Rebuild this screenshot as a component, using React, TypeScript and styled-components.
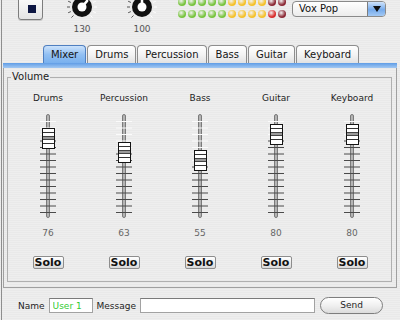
import React from "react";
import styled, { createGlobalStyle } from "styled-components";

const GlobalStyle = createGlobalStyle`
  html, body { margin: 0; padding: 0; }
  body {
    width: 400px;
    height: 320px;
    overflow: hidden;
    background-color: #ececec;
    background-image: repeating-linear-gradient(0deg, #eeeeee 0px, #eeeeee 1px, #e9e9e9 1px, #e9e9e9 2px);
    font-family: "DejaVu Sans", "Liberation Sans", sans-serif;
    color: #1e1e1e;
  }
`;

const Window = styled.div`
  width: 398px;
  height: 320px;
  margin-left: 1px;
  border-left: 1px solid #8e8e8e;
  overflow: hidden;
  display: flex;
  flex-direction: column;
`;

/* ---------- toolbar ---------- */
const Toolbar = styled.div`
  display: flex;
  align-items: flex-start;
  height: 51px;
  margin-top: -6px;
  padding: 0 14px 0 16px;
  flex-shrink: 0;
`;

const StopButton = styled.div`
  box-sizing: border-box;
  width: 25px;
  height: 26px;
  padding: 3px 0 0 2px;
  border: 1px solid #7d7d7d;
  border-radius: 0 0 3px 3px;
  background: linear-gradient(#ffffff, #e4e4e4);
  box-shadow: 0 1px 0 #c9c9c9;
  display: flex;
  align-items: center;
  justify-content: center;
`;

const StopSquare = styled.div`
  width: 8px;
  height: 8px;
  background: #0d1642;
`;

const KnobGroup = styled.div<{ $gap: number }>`
  margin-left: ${(p) => p.$gap}px;
  width: 34px;
  display: flex;
  flex-direction: column;
  align-items: center;
`;

const KnobLabel = styled.div`
  margin-top: 1px;
  font-size: 9px;
  line-height: 11px;
  color: #555;
`;

const LedGrid = styled.div`
  margin: 4px 0 0 19px;
  display: grid;
  grid-template-columns: repeat(11, 8px);
  column-gap: 2px;
  row-gap: 4px;
`;

const Led = styled.div<{ $c: string }>`
  width: 8px;
  height: 8px;
  border-radius: 50%;
  background: radial-gradient(circle at 40% 35%, rgba(255, 255, 255, 0.4), ${(p) => p.$c} 60%);
`;

const Dropdown = styled.div`
  box-sizing: border-box;
  margin: 7px 0 0 auto;
  width: 94px;
  height: 16px;
  border: 1px solid #8a8a8a;
  border-radius: 4px;
  background: linear-gradient(#ffffff, #ececec);
  display: flex;
  overflow: hidden;
`;

const DropdownText = styled.div`
  flex: 1;
  padding-left: 6px;
  font-size: 10px;
  line-height: 14px;
  color: #111;
`;

const DropdownArrow = styled.div`
  width: 17px;
  border-left: 1px solid #7d7d7d;
  background: linear-gradient(#cfe3fb, #76abec 55%, #a3c9f4);
  display: flex;
  align-items: center;
  justify-content: center;
  &::after {
    content: "";
    border-left: 4px solid transparent;
    border-right: 4px solid transparent;
    border-top: 6px solid #111;
  }
`;

/* ---------- tabs ---------- */
const TabBar = styled.div`
  display: flex;
  justify-content: center;
  gap: 1px;
  height: 18px;
  flex-shrink: 0;
`;

const Tab = styled.div<{ $active?: boolean }>`
  box-sizing: border-box;
  height: 18px;
  padding: 0 7px;
  border: 1px solid ${(p) => (p.$active ? "#4f7fc0" : "#8e8e8e")};
  border-bottom: none;
  border-radius: 4px 4px 0 0;
  background: ${(p) =>
    p.$active
      ? "linear-gradient(#cbe2fb, #92c0f3 50%, #78b0ee)"
      : "linear-gradient(#ffffff, #f4f4f4 50%, #e2e2e2)"};
  font-size: 10px;
  line-height: 17px;
  color: #151515;
`;

const PaneBand = styled.div`
  height: 5px;
  margin: 0 3px 0 1px;
  background: linear-gradient(#5f9de6, #a3c8f2);
  flex-shrink: 0;
`;

const PaneBody = styled.div`
  margin: 0 3px 0 1px;
  padding: 3px 4px 5px 3px;
  border: 1px solid #a0a0a0;
  border-top: none;
  flex-shrink: 0;
`;

const GroupBox = styled.fieldset`
  margin: 0;
  padding: 10px 2px 12px 2px;
  border: 1px solid #b0b0b0;
  min-width: 0;
`;

const GroupLegend = styled.legend`
  margin-left: 1px;
  padding: 0 1px;
  font-size: 10px;
  line-height: 12px;
  color: #1a1a1a;
`;

const Channels = styled.div`
  display: grid;
  grid-template-columns: repeat(5, 76px);
`;

const Channel = styled.div`
  display: flex;
  flex-direction: column;
  align-items: center;
`;

const ChannelLabel = styled.div`
  font-size: 9px;
  line-height: 11px;
  color: #1e1e1e;
`;

const Slider = styled.div`
  position: relative;
  width: 30px;
  height: 124px;
`;

const Thumb = styled.div`
  position: absolute;
  left: 9px;
  box-sizing: border-box;
  width: 13px;
  height: 21px;
  border: 1px solid #141414;
  background: linear-gradient(
    to bottom,
    #fff 0 3px,
    #333 3px 4px,
    #fff 4px 7px,
    #444 7px 8px,
    #9a9a9a 8px 10px,
    #444 10px 11px,
    #fff 11px 14px,
    #333 14px 15px,
    #fff 15px
  );
`;

const ValueLabel = styled.div`
  font-size: 9px;
  line-height: 11px;
  color: #666;
`;

const SoloButton = styled.div`
  box-sizing: border-box;
  margin-top: 17px;
  width: 31px;
  height: 13px;
  border: 1px solid #8d8d8d;
  border-radius: 2px;
  background: linear-gradient(#ffffff, #e9e9e9 60%, #d9d9d9);
  font-size: 11px;
  font-weight: bold;
  line-height: 11px;
  text-align: center;
  color: #111;
`;

/* ---------- bottom bar ---------- */
const BottomBar = styled.div`
  margin-top: 9px;
  height: 17px;
  padding-left: 16px;
  display: flex;
  align-items: center;
  flex-shrink: 0;
`;

const FieldLabel = styled.span<{ $gap?: number }>`
  margin-left: ${(p) => p.$gap ?? 0}px;
  font-size: 9px;
  color: #1e1e1e;
`;

const TextField = styled.input<{ $w: number }>`
  box-sizing: border-box;
  margin: 0 0 0 4px;
  width: ${(p) => p.$w}px;
  height: 15px;
  padding: 0 0 0 3px;
  border: 1px solid #a2a2a2;
  border-top-color: #7a7a7a;
  background: #fff;
  font-family: "DejaVu Sans", sans-serif;
  font-size: 9px;
  color: #33cc33;
  outline: none;
`;

const SendButton = styled.div`
  box-sizing: border-box;
  margin-left: 5px;
  width: 63px;
  height: 17px;
  border: 1px solid #7e7e7e;
  border-radius: 9px;
  background: linear-gradient(#ffffff, #f0f0f0 50%, #dcdcdc);
  font-size: 9px;
  line-height: 15px;
  text-align: center;
  color: #1e1e1e;
`;

/* ---------- drawings ---------- */
function Knob({ angle }: { angle: number }) {
  const cx = 17;
  const cy = 13;
  const ticks: React.ReactNode[] = [];
  for (let a = -135; a <= 135.1; a += 22.5) {
    const rad = (a * Math.PI) / 180;
    const x1 = cx + 12 * Math.sin(rad);
    const y1 = cy - 12 * Math.cos(rad);
    const x2 = cx + 15 * Math.sin(rad);
    const y2 = cy - 15 * Math.cos(rad);
    ticks.push(
      <line key={a} x1={x1} y1={y1} x2={x2} y2={y2} stroke={a <= angle ? "#555" : "#fff"} strokeWidth={1} />
    );
  }
  const pr = (angle * Math.PI) / 180;
  return (
    <svg width="34" height="29" viewBox="0 0 34 29">
      {ticks}
      <circle cx={cx} cy={cy} r={10} fill="#111" />
      <circle cx={cx} cy={cy} r={4.5} fill="#fff" />
      <line
        x1={cx}
        y1={cy}
        x2={cx + 8 * Math.sin(pr)}
        y2={cy - 8 * Math.cos(pr)}
        stroke="#fff"
        strokeWidth={2.5}
        strokeLinecap="round"
      />
    </svg>
  );
}

const TRACK_TOP = 10;
const TRACK_H = 104;

function Scale({ center }: { center: number }) {
  const ticks: React.ReactNode[] = [];
  for (let i = 0; i < 15; i++) {
    const y = TRACK_TOP + 7 + i * 6.5 + 0.5;
    ticks.push(
      <line key={i} x1={7} x2={23} y1={y} y2={y} stroke={y > center ? "#4a4a4a" : "#fbfbfb"} strokeWidth={1} />
    );
  }
  return (
    <svg width="30" height="124" viewBox="0 0 30 124">
      <rect x={13.5} y={TRACK_TOP + 0.5} width={3} height={TRACK_H - 1} rx={1.5} fill="#b4b4b4" stroke="#7a7a7a" />
      {ticks}
    </svg>
  );
}

const LED_COLORS: Record<string, string> = {
  g: "#78c43e",
  y: "#f5c12a",
  r: "#d92b2b",
  d: "#8c2a36",
};
const LED_ROWS = [
  ["g", "g", "g", "g", "g", "y", "y", "y", "y", "d", "d"],
  ["g", "g", "g", "g", "g", "y", "y", "y", "y", "r", "d"],
];

const CHANNELS = [
  { name: "Drums", value: 76 },
  { name: "Percussion", value: 63 },
  { name: "Bass", value: 55 },
  { name: "Guitar", value: 80 },
  { name: "Keyboard", value: 80 },
];

const TABS = ["Mixer", "Drums", "Percussion", "Bass", "Guitar", "Keyboard"];

export default function App() {
  return (
    <>
      <GlobalStyle />
      <Window>
        <Toolbar>
          <StopButton>
            <StopSquare />
          </StopButton>
          <KnobGroup $gap={22}>
            <Knob angle={40} />
            <KnobLabel>130</KnobLabel>
          </KnobGroup>
          <KnobGroup $gap={26}>
            <Knob angle={0} />
            <KnobLabel>100</KnobLabel>
          </KnobGroup>
          <LedGrid>
            {LED_ROWS.flatMap((row, r) => row.map((c, i) => <Led key={`${r}-${i}`} $c={LED_COLORS[c]} />))}
          </LedGrid>
          <Dropdown>
            <DropdownText>Vox Pop</DropdownText>
            <DropdownArrow />
          </Dropdown>
        </Toolbar>

        <TabBar>
          {TABS.map((t, i) => (
            <Tab key={t} $active={i === 0}>
              {t}
            </Tab>
          ))}
        </TabBar>
        <PaneBand />
        <PaneBody>
          <GroupBox>
            <GroupLegend>Volume</GroupLegend>
            <Channels>
              {CHANNELS.map((ch) => {
                const center = TRACK_TOP + (100 - ch.value) * 1.04;
                return (
                  <Channel key={ch.name}>
                    <ChannelLabel>{ch.name}</ChannelLabel>
                    <Slider>
                      <Scale center={center} />
                      <Thumb style={{ top: `${Math.round(center - 10.5)}px` }} />
                    </Slider>
                    <ValueLabel>{ch.value}</ValueLabel>
                    <SoloButton>Solo</SoloButton>
                  </Channel>
                );
              })}
            </Channels>
          </GroupBox>
        </PaneBody>

        <BottomBar>
          <FieldLabel>Name</FieldLabel>
          <TextField $w={44} defaultValue="User 1" readOnly />
          <FieldLabel $gap={4}>Message</FieldLabel>
          <TextField $w={175} defaultValue="" readOnly />
          <SendButton>Send</SendButton>
        </BottomBar>
      </Window>
    </>
  );
}
